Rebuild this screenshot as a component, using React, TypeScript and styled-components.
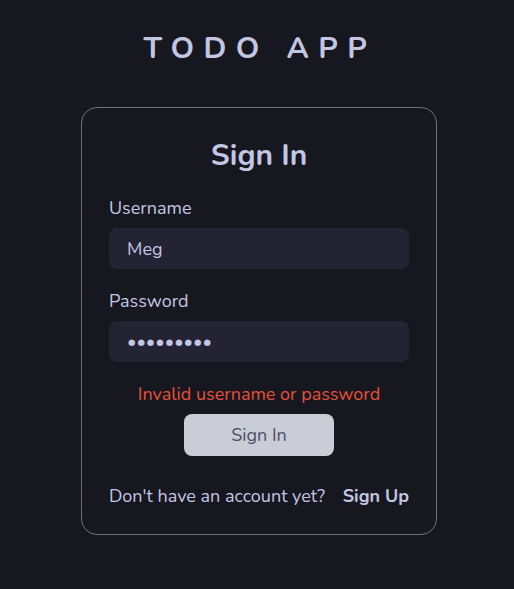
import React from "react";
import styled, { createGlobalStyle } from "styled-components";

const Global = createGlobalStyle`
  html, body { margin: 0; padding: 0; background: #17171f; }
  body { font-family: "Nunito", "Lato", "Noto Sans", sans-serif; }
  * { box-sizing: border-box; }
`;

const Page = styled.div`
  min-height: 589px;
  display: flex;
  flex-direction: column;
  align-items: center;
  padding-top: 30px;
`;

const AppTitle = styled.h1`
  margin: 0;
  font-size: 30px;
  font-weight: 700;
  letter-spacing: 9.5px;
  padding-left: 6px;
  color: #c3c6e3;
  line-height: 38px;
`;

const Card = styled.div`
  margin-top: 39px;
  margin-left: 4px;
  width: 356px;
  border: 1px solid #6d6e82;
  border-radius: 16px;
  padding: 28px 27px 26px;
  display: flex;
  flex-direction: column;
`;

const Heading = styled.h2`
  margin: 0;
  text-align: center;
  font-size: 30px;
  font-weight: 700;
  color: #c3c6e3;
  line-height: 40px;
`;

const Label = styled.label<{ $top: number }>`
  margin-top: ${(p) => p.$top}px;
  font-size: 18px;
  color: #c3c6e3;
  line-height: 24px;
`;

const Input = styled.div`
  margin-top: 8px;
  height: 41px;
  border-radius: 8px;
  background: #232333;
  display: flex;
  align-items: center;
  padding-left: 18px;
  font-size: 18px;
  color: #c3c6e3;
`;

const Dots = styled.span`
  letter-spacing: 0;
  font-size: 18px;
`;

const ErrorText = styled.div`
  margin-top: 20px;
  text-align: center;
  color: #e8503a;
  font-size: 18px;
  line-height: 24px;
`;

const Button = styled.button`
  align-self: center;
  margin-top: 8px;
  width: 150px;
  height: 42px;
  border: none;
  border-radius: 8px;
  background: #cbcdd6;
  color: #4b4e69;
  font-family: inherit;
  font-size: 18px;
`;

const Footer = styled.div`
  margin-top: 28px;
  display: flex;
  justify-content: space-between;
  align-items: center;
  font-size: 18px;
  color: #c3c6e3;
  line-height: 24px;
`;

const Link = styled.span`
  font-weight: 700;
`;

export default function App() {
  return (
    <>
      <Global />
      <Page>
        <AppTitle>TODO APP</AppTitle>
        <Card>
          <Heading>Sign In</Heading>
          <Label $top={20}>Username</Label>
          <Input>Meg</Input>
          <Label $top={20}>Password</Label>
          <Input>
            <Dots>•••••••••</Dots>
          </Input>
          <ErrorText>Invalid username or password</ErrorText>
          <Button>Sign In</Button>
          <Footer>
            <span>Don't have an account yet?</span>
            <Link>Sign Up</Link>
          </Footer>
        </Card>
      </Page>
    </>
  );
}
